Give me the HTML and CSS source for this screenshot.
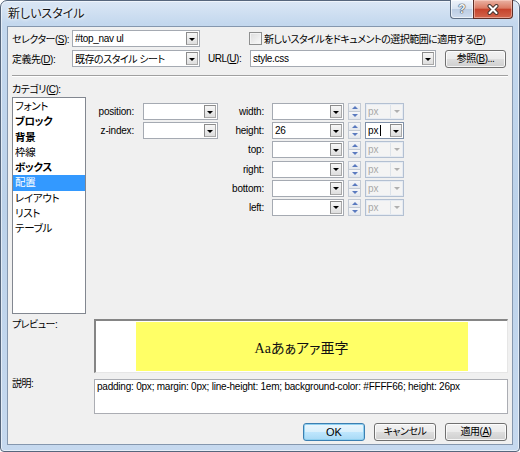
FILE: index.html
```html
<!DOCTYPE html>
<html lang="ja">
<head>
<meta charset="utf-8">
<title>新しいスタイル</title>
<link rel="stylesheet" href="styles.css">
</head>
<body>
<div class="window">
  <div class="titlebar">
    <span class="title">新しいスタイル</span>
    <div class="caption">
      <div class="cbtn help">?</div>
      <div class="cbtn close">
        <svg width="14" height="11" viewBox="0 0 14 11"><path d="M3.5 2 L10.5 9 M10.5 2 L3.5 9" stroke="#4a3530" stroke-width="4" stroke-linecap="round"/><path d="M3.5 2 L10.5 9 M10.5 2 L3.5 9" stroke="#fff" stroke-width="2" stroke-linecap="round"/></svg>
      </div>
    </div>
  </div>
  <div class="client">
    <div class="row">
      <span class="lbl-main jp">セレクター(<u>S</u>):</span>
      <div class="combo combo-sel"><span class="ctext lat">#top_nav ul</span><span class="dd"></span></div>
      <span class="check"></span>
      <span class="check-label jp">新しいスタイルをドキュメントの選択範囲に適用する(<u>P</u>)</span>
    </div>
    <div class="row row2">
      <span class="lbl-main jp">定義先(<u>D</u>):</span>
      <div class="combo combo-sel"><span class="ctext jp">既存のスタイル シート</span><span class="dd"></span></div>
      <span class="lbl-url jp">URL(<u>U</u>):</span>
      <div class="combo combo-url"><span class="ctext lat">style.css</span><span class="dd"></span></div>
      <button class="btn btn-browse jp">参照(<u>B</u>)...</button>
    </div>
    <div class="sep"></div>
    <div class="cat-label jp">カテゴリ(<u>C</u>):</div>
    <div class="main">
      <ul class="listbox jp">
        <li>フォント</li>
        <li class="b">ブロック</li>
        <li class="b">背景</li>
        <li>枠線</li>
        <li class="b">ボックス</li>
        <li class="sel">配置</li>
        <li>レイアウト</li>
        <li>リスト</li>
        <li>テーブル</li>
      </ul>
      <div class="props">
        <div class="pgrid-left">
          <span class="plabel">position:</span>
          <div class="combo"><span class="ctext"></span><span class="dd"></span></div>
          <span class="plabel">z-index:</span>
          <div class="combo"><span class="ctext"></span><span class="dd"></span></div>
        </div>
        <div class="pgrid-right">
          <span class="plabel">width:</span>
          <div class="combo"><span class="ctext"></span><span class="dd"></span></div>
          <div class="spin"><span class="up"></span><span class="down"></span></div>
          <div class="unit off"><span class="utext">px</span><span class="udd"></span></div>

          <span class="plabel">height:</span>
          <div class="combo"><span class="ctext lat">26</span><span class="dd"></span></div>
          <div class="spin"><span class="up"></span><span class="down"></span></div>
          <div class="unit on"><span class="utext">px<span class="caret"></span></span><span class="dd"></span></div>

          <span class="plabel">top:</span>
          <div class="combo"><span class="ctext"></span><span class="dd"></span></div>
          <div class="spin"><span class="up"></span><span class="down"></span></div>
          <div class="unit off"><span class="utext">px</span><span class="udd"></span></div>

          <span class="plabel">right:</span>
          <div class="combo"><span class="ctext"></span><span class="dd"></span></div>
          <div class="spin"><span class="up"></span><span class="down"></span></div>
          <div class="unit off"><span class="utext">px</span><span class="udd"></span></div>

          <span class="plabel">bottom:</span>
          <div class="combo"><span class="ctext"></span><span class="dd"></span></div>
          <div class="spin"><span class="up"></span><span class="down"></span></div>
          <div class="unit off"><span class="utext">px</span><span class="udd"></span></div>

          <span class="plabel">left:</span>
          <div class="combo"><span class="ctext"></span><span class="dd"></span></div>
          <div class="spin"><span class="up"></span><span class="down"></span></div>
          <div class="unit off"><span class="utext">px</span><span class="udd"></span></div>
        </div>
      </div>
    </div>
    <div class="prev-row">
      <span class="side-label jp">プレビュー:</span>
      <div class="preview">
        <div class="yellow">Aaあぁアァ亜字</div>
      </div>
    </div>
    <div class="desc-row">
      <span class="side-label jp">説明:</span>
      <div class="desc">padding: 0px; margin: 0px; line-height: 1em; background-color: #FFFF66; height: 26px</div>
    </div>
    <div class="buttons">
      <button class="btn btn-ok">OK</button>
      <button class="btn jp">キャンセル</button>
      <button class="btn jp">適用(<u>A</u>)</button>
    </div>
  </div>
</div>
</body>
</html>
```
FILE: styles.css
```css
* { box-sizing: border-box; }
html, body { margin: 0; padding: 0; }
body {
  width: 520px;
  height: 452px;
  overflow: hidden;
  background: #fff;
  font-family: "Liberation Sans", "Noto Sans CJK JP", sans-serif;
  font-size: 11px;
  color: #000;
}
.jp { font-size: 10px; font-feature-settings: "palt"; letter-spacing: -0.5px; }
.lat { font-size: 10px; letter-spacing: -0.3px; }
u { text-decoration: underline; text-underline-offset: 1px; }

.window {
  width: 520px;
  height: 452px;
  border: 1px solid #56667c;
  border-radius: 7px 7px 4px 4px;
  background: linear-gradient(180deg, #dbe7f5 0%, #c4d8ee 5%, #bcd2ea 45%, #c6d9ef 100%);
  box-shadow: inset 0 0 0 1px rgba(255,255,255,0.55);
  padding: 0 6px 6px 6px;
  display: flex;
  flex-direction: column;
}
.titlebar { height: 25px; display: flex; align-items: flex-start; }
.title {
  margin-top: 5px;
  margin-left: 1px;
  font-family: "Noto Sans CJK JP", sans-serif;
  font-feature-settings: "palt";
  font-size: 12px;
  line-height: 14px;
  color: #151515;
  text-shadow: 0 0 5px #fff, 0 0 3px #fff;
}
.caption { margin-left: auto; margin-top: -1px; display: flex; }
.cbtn {
  height: 19px;
  display: flex;
  align-items: center;
  justify-content: center;
}
.help {
  width: 23px;
  border: 1px solid #5f6f84;
  border-top: none;
  border-right: none;
  border-radius: 0 0 0 4px;
  background: linear-gradient(180deg, #eef3fa 0%, #d7e3f1 48%, #bccde3 52%, #cfdcee 100%);
  box-shadow: inset 0 0 0 1px rgba(255,255,255,0.6);
  color: #f6f8fb;
  font: bold 12px "Liberation Sans", sans-serif;
  text-shadow: 0 0 1px #2f3a48, 0 0 1px #2f3a48, 0 0 1px #2f3a48;
}
.close {
  width: 40px;
  border: 1px solid #5e2f28;
  border-top: none;
  border-radius: 0 0 4px 0;
  background: linear-gradient(180deg, #eab3a4 0%, #db7a63 45%, #c6432c 52%, #d2654c 100%);
  box-shadow: inset 0 0 0 1px rgba(255,220,210,0.5);
}

.client {
  flex: 1;
  background: #f0f0f0;
  border: 1px solid #8597ae;
  padding: 3px 4px 0 4px;
  display: flex;
  flex-direction: column;
}
.row { display: flex; align-items: center; height: 17px; }
.row2 { margin-top: 3px; }
.lbl-main { width: 60px; white-space: nowrap; }

.combo {
  height: 17px;
  border: 1px solid #a5aab2;
  background: #fff;
  display: flex;
  align-items: center;
  padding-left: 2px;
}
.ctext { flex: 1; white-space: nowrap; overflow: hidden; }
.dd {
  width: 12px;
  height: 13px;
  margin-right: 1px;
  border: 1px solid #8b8b8b;
  border-right-color: #a8a8a8;
  border-bottom-color: #a8a8a8;
  background: linear-gradient(180deg, #f7f7f7, #dedede);
  display: flex;
  align-items: center;
  justify-content: center;
}
.dd::after {
  content: "";
  border-left: 3px solid transparent;
  border-right: 3px solid transparent;
  border-top: 3px solid #000;
  margin-top: 1px;
}
.combo-sel { width: 128px; }
.check {
  width: 13px;
  height: 13px;
  margin-left: 49px;
  border: 1px solid #8e8f8f;
  background: linear-gradient(135deg, #dcdcdc, #fafafa);
  box-shadow: inset 0 0 0 1px #f3f3f3;
}
.check-label { margin-left: 2px; white-space: nowrap; }
.lbl-url { margin-left: 8px; width: 42px; white-space: nowrap; }
.combo-url { width: 186px; }
.btn {
  font-family: "Liberation Sans", "Noto Sans CJK JP", sans-serif;
  font-size: 11px;
  color: #000;
  width: 62px;
  height: 18px;
  padding: 0;
  border: 1px solid #707070;
  border-radius: 3px;
  background: linear-gradient(180deg, #f2f2f2 0%, #ebebeb 48%, #dddddd 52%, #cfcfcf 100%);
  box-shadow: inset 0 0 0 1px rgba(255,255,255,0.8);
  display: flex;
  align-items: center;
  justify-content: center;
  line-height: 14px;
}
.btn.jp { font-size: 10px; }
.btn-browse { margin-left: 9px; width: 61px; }

.sep { margin-top: 8px; height: 2px; border-top: 1px solid #a0a0a0; border-bottom: 1px solid #fff; }
.cat-label { margin-top: 6px; line-height: 13px; height: 13px; }
.main { display: flex; align-items: flex-start; margin-top: 1px; height: 217px; }
.listbox {
  width: 74px;
  height: 217px;
  margin: 0;
  padding: 1px 0;
  list-style: none;
  border: 1px solid #828790;
  background: #fff;
  font-size: 10.5px;
  letter-spacing: -0.3px;
}
.listbox li { height: 15.25px; line-height: 15.25px; padding-left: 2px; white-space: nowrap; }
.listbox li.b { font-weight: bold; }
.listbox li.sel { background: #3399ff; color: #fff; }

.props { display: flex; align-items: flex-start; margin-left: 8px; margin-top: 6px; }
.plabel { text-align: right; font-size: 10px; line-height: 17px; white-space: nowrap; letter-spacing: -0.2px; }
.pgrid-left {
  display: grid;
  grid-template-columns: 40px 75px;
  grid-auto-rows: 17px;
  column-gap: 9px;
  row-gap: 2px;
}
.pgrid-right {
  margin-left: 8px;
  display: grid;
  grid-template-columns: 42px 72px 13px 39px;
  grid-auto-rows: 17px;
  column-gap: 4px;
  row-gap: 2.2px;
}
.pgrid-right .plabel { margin-right: 4px; }

.spin { display: flex; flex-direction: column; height: 17px; }
.spin span {
  flex: 1;
  border: 1px solid #c3cad4;
  background: linear-gradient(180deg, #f6f7f9, #e3e7ec);
  display: flex;
  align-items: center;
  justify-content: center;
}
.spin .down { border-top: none; }
.spin .up::after {
  content: "";
  border-left: 3px solid transparent;
  border-right: 3px solid transparent;
  border-bottom: 3px solid #5a7abf;
}
.spin .down::after {
  content: "";
  border-left: 3px solid transparent;
  border-right: 3px solid transparent;
  border-top: 3px solid #5a7abf;
}
.unit {
  height: 17px;
  display: flex;
  align-items: center;
  padding-left: 2px;
  font-size: 10px;
}
.unit.off {
  border: 1px solid #b3c0d2;
  background: #f4f4f4;
  box-shadow: inset 0 0 0 1px #e6ebf2;
  color: #a8a8a8;
}
.unit.on {
  border: 1px solid #7f90a8;
  background: #fff;
  color: #000;
}
.utext { flex: 1; display: flex; align-items: center; }
.caret { display: inline-block; width: 1px; height: 11px; background: #000; margin-left: 1px; }
.udd {
  width: 12px;
  height: 13px;
  margin-right: 1px;
  border-left: 1px solid #dde3ea;
  display: flex;
  align-items: center;
  justify-content: center;
}
.udd::after {
  content: "";
  border-left: 3px solid transparent;
  border-right: 3px solid transparent;
  border-top: 3px solid #b0b0b0;
}

.prev-row { display: flex; margin-top: 5px; }
.side-label { width: 82px; line-height: 13px; white-space: nowrap; }
.prev-row .side-label { margin-top: -1px; }
.preview {
  width: 414px;
  height: 54px;
  border-top: 2px solid #858585;
  border-left: 2px solid #858585;
  border-right: 1px solid #e6e6e6;
  border-bottom: 1px solid #e6e6e6;
  background: #fff;
  display: flex;
  justify-content: center;
  padding-top: 1px;
}
.yellow {
  width: 332px;
  height: 49px;
  background: #ffff66;
  display: flex;
  align-items: center;
  justify-content: center;
  font-family: "Liberation Serif", "Noto Sans CJK JP", serif;
  font-feature-settings: "palt";
  font-size: 14px;
  color: #111;
}
.desc-row { display: flex; margin-top: 6px; }
.desc-row .side-label { margin-top: -2px; }
.desc {
  width: 414px;
  height: 35px;
  border: 1px solid #abadb3;
  background: #fff;
  padding: 0 2px;
  font-size: 10px;
  line-height: 13px;
  letter-spacing: -0.22px;
  white-space: nowrap;
}
.buttons { display: flex; justify-content: flex-end; gap: 9px; margin-top: 9px; margin-right: 1px; }
.btn-ok {
  border-color: #3c7fb1;
  background: linear-gradient(180deg, #eaf6fd 0%, #d9f0fc 48%, #bee6fd 52%, #a7d9f5 100%);
  box-shadow: inset 0 0 0 1px #8fd0f0;
}
```
